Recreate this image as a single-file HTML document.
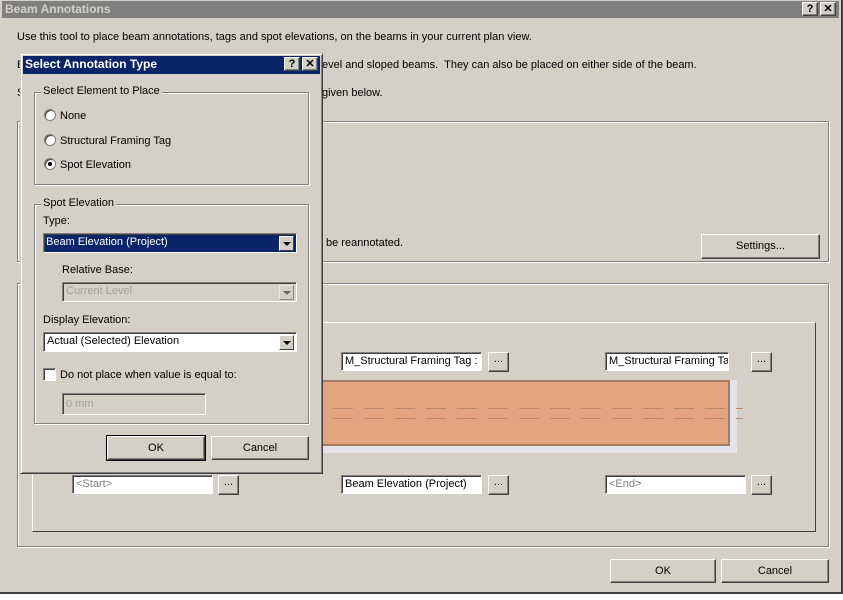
<!DOCTYPE html>
<html><head><style>
*{margin:0;padding:0;box-sizing:border-box}
body{width:843px;height:600px;background:#fff;position:relative;overflow:hidden;font-family:"Liberation Sans",sans-serif;font-size:11px;color:#000}
.a{position:absolute}
.bg{background:#d4d0c8}
.grp{position:absolute;border:1px solid #808080;box-shadow:1px 1px 0 #fff inset,1px 1px 0 #fff}
.btn{position:absolute;background:#d4d0c8;border:1px solid;border-color:#fff #404040 #404040 #fff;box-shadow:inset -1px -1px 0 #808080;text-align:center}
.fld{position:absolute;background:#fff;border:1px solid;border-color:#808080 #fff #fff #808080;box-shadow:inset 1px 1px 0 #404040;padding:2px 0 0 3px;white-space:nowrap;overflow:hidden}
.t{position:absolute;white-space:nowrap}
.rad{position:absolute;width:12px;height:12px;border-radius:50%;background:#fff;border:1px solid #808080;box-shadow:inset 1px 1px 0 #404040}
.dd{position:absolute;right:2px;top:2px;width:15px;height:15px;background:#d4d0c8;border:1px solid;border-color:#fff #404040 #404040 #fff}
.dd:after{content:"";position:absolute;left:3px;top:5px;border:4px solid transparent;border-top:4px solid #000;border-bottom:0}
.leg{position:absolute;background:#d4d0c8;padding:0 2px;top:-8px;left:6px}
</style></head><body>
<div class="a bg" style="left:0;top:0;width:843px;height:594px;border-right:2px solid #404040;border-bottom:2px solid #404040"></div>
<div class="a" style="left:2px;top:1px;width:837px;height:17px;background:#808080"></div>
<div class="t" style="left:5px;top:2px;color:#d4d0c8;font-weight:bold;font-size:12px">Beam Annotations</div>
<div class="btn" style="left:802px;top:2px;width:16px;height:14px;font-weight:bold;line-height:12px">?</div>
<div class="btn" style="left:820px;top:2px;width:16px;height:14px;font-weight:bold;line-height:12px">✕</div>
<div class="t" style="left:17px;top:31px">Use this tool to place beam annotations, tags and spot elevations, on the beams in your current plan view.</div>
<div class="t" style="left:17px;top:59px">B</div>
<div class="t" style="left:322px;top:59px">evel and sloped beams.&nbsp; They can also be placed on either side of the beam.</div>
<div class="t" style="left:17px;top:87px">S</div>
<div class="t" style="left:322px;top:87px">given below.</div>
<div class="grp" style="left:17px;top:121px;width:812px;height:141px"></div>
<div class="t" style="left:326px;top:237px">be reannotated.</div>
<div class="btn" style="left:701px;top:234px;width:119px;height:25px;line-height:22px">Settings...</div>
<div class="grp" style="left:17px;top:283px;width:812px;height:264px"></div>
<div class="a" style="left:32px;top:322px;width:784px;height:210px;border:1px solid;border-color:#fff #404040 #404040 #fff"></div>
<div class="a" style="left:318px;top:380px;width:419px;height:73px;background:#e4e2ea"></div>
<div class="a" style="left:300px;top:380px;width:430px;height:66px;background:#e2a57f;border:2px solid #a47b63"></div>
<div class="a" style="left:333px;top:408px;width:410px;height:1px;background:repeating-linear-gradient(90deg,#b98a6e 0 20px,transparent 20px 31px)"></div>
<div class="a" style="left:333px;top:418px;width:410px;height:1px;background:repeating-linear-gradient(90deg,#b98a6e 0 20px,transparent 20px 31px)"></div>
<div class="fld" style="left:341px;top:352px;width:141px;height:19px">M_Structural Framing Tag : S</div>
<div class="btn" style="left:488px;top:352px;width:21px;height:20px">...</div>
<div class="fld" style="left:605px;top:352px;width:124px;height:19px">M_Structural Framing Tag-w</div>
<div class="btn" style="left:751px;top:352px;width:21px;height:20px">...</div>
<div class="fld" style="left:72px;top:475px;width:141px;height:19px;color:#808080">&lt;Start&gt;</div>
<div class="btn" style="left:218px;top:475px;width:21px;height:20px">...</div>
<div class="fld" style="left:341px;top:475px;width:141px;height:19px">Beam Elevation (Project)</div>
<div class="btn" style="left:488px;top:475px;width:21px;height:20px">...</div>
<div class="fld" style="left:605px;top:475px;width:141px;height:19px;color:#808080">&lt;End&gt;</div>
<div class="btn" style="left:751px;top:475px;width:21px;height:20px">...</div>
<div class="btn" style="left:610px;top:559px;width:106px;height:24px;line-height:22px">OK</div>
<div class="btn" style="left:721px;top:559px;width:108px;height:24px;line-height:22px">Cancel</div>

<!-- popup -->
<div class="a bg" style="left:20px;top:53px;width:303px;height:421px;border:1px solid;border-color:#d4d0c8 #404040 #404040 #d4d0c8;box-shadow:inset 1px 1px 0 #fff,inset -1px -1px 0 #808080"></div>
<div class="a" style="left:23px;top:56px;width:297px;height:18px;background:#0a246a"></div>
<div class="t" style="left:25px;top:57px;color:#fff;font-weight:bold;font-size:12px">Select Annotation Type</div>
<div class="btn" style="left:284px;top:57px;width:16px;height:14px;font-weight:bold;line-height:12px">?</div>
<div class="btn" style="left:302px;top:57px;width:16px;height:14px;font-weight:bold;line-height:12px">✕</div>
<div class="grp" style="left:34px;top:92px;width:275px;height:93px"><span class="leg">Select Element to Place</span></div>
<div class="rad" style="left:44px;top:109px"></div><div class="t" style="left:60px;top:110px">None</div>
<div class="rad" style="left:44px;top:134px"></div><div class="t" style="left:60px;top:135px">Structural Framing Tag</div>
<div class="rad" style="left:44px;top:158px"><div class="a" style="left:3px;top:3px;width:4px;height:4px;background:#000;border-radius:50%"></div></div><div class="t" style="left:60px;top:159px">Spot Elevation</div>
<div class="grp" style="left:34px;top:204px;width:275px;height:220px"><span class="leg">Spot Elevation</span></div>
<div class="t" style="left:43px;top:215px">Type:</div>
<div class="fld" style="left:43px;top:233px;width:254px;height:20px;background:#0a246a;color:#fff;padding-left:2px">Beam Elevation (Project)<div class="dd"></div></div>
<div class="t" style="left:62px;top:264px">Relative Base:</div>
<div class="fld" style="left:62px;top:282px;width:235px;height:20px;background:#d4d0c8;color:#a0a0a0">Current Level<div class="dd" style="opacity:.5"></div></div>
<div class="t" style="left:43px;top:314px">Display Elevation:</div>
<div class="fld" style="left:43px;top:332px;width:254px;height:20px">Actual (Selected) Elevation<div class="dd"></div></div>
<div class="fld" style="left:43px;top:368px;width:13px;height:13px;padding:0"></div>
<div class="t" style="left:60px;top:369px">Do not place when value is equal to:</div>
<div class="fld" style="left:62px;top:393px;width:144px;height:22px;background:#d4d0c8;color:#a0a0a0;padding-top:4px">0 mm</div>
<div class="btn" style="left:107px;top:436px;width:98px;height:24px;line-height:22px;outline:1px solid #000">OK</div>
<div class="btn" style="left:211px;top:436px;width:98px;height:24px;line-height:22px">Cancel</div>
</body></html>
